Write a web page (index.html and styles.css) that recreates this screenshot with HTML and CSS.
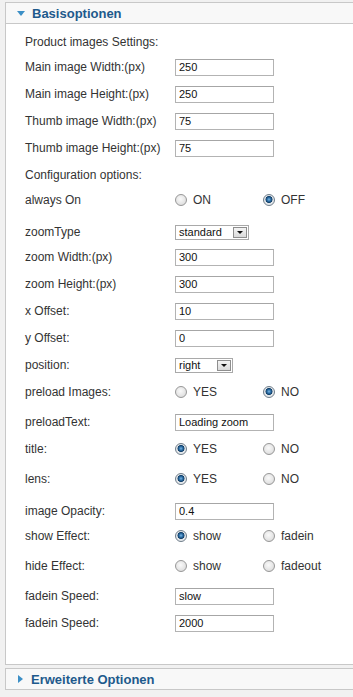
FILE: index.html
```html
<!DOCTYPE html>
<html lang="de">
  <head>
    <meta charset="UTF-8" />
    <meta name="viewport" content="width=device-width, initial-scale=1.0" />
    <title>Zoom Optionen</title>
    <link rel="stylesheet" href="styles.css">
  </head>
  <body>
    <div class="pane open">
      <div class="pane-head"><span class="arrow down"></span>Basisoptionen</div>
      <div class="pane-body">
        <div class="row"><span class="label">Product images Settings:</span></div>
        <div class="row tight">
          <label class="label">Main image Width:(px)</label>
          <input class="text" type="text" value="250" />
        </div>
        <div class="row">
          <label class="label">Main image Height:(px)</label>
          <input class="text" type="text" value="250" />
        </div>
        <div class="row">
          <label class="label">Thumb image Width:(px)</label>
          <input class="text" type="text" value="75" />
        </div>
        <div class="row">
          <label class="label">Thumb image Height:(px)</label>
          <input class="text" type="text" value="75" />
        </div>
        <div class="row"><span class="label">Configuration options:</span></div>
        <div class="row tight">
          <span class="label">always On</span>
          <div class="radios">
            <label class="opt"><input type="radio" name="alwayson" />ON</label>
            <label class="opt"><input type="radio" name="alwayson" checked />OFF</label>
          </div>
        </div>
        <div class="row looser">
          <span class="label">zoomType</span>
          <div class="select wide"><span class="value">standard</span><span class="btn"></span></div>
        </div>
        <div class="row tight">
          <label class="label">zoom Width:(px)</label>
          <input class="text" type="text" value="300" />
        </div>
        <div class="row">
          <label class="label">zoom Height:(px)</label>
          <input class="text" type="text" value="300" />
        </div>
        <div class="row">
          <label class="label">x Offset:</label>
          <input class="text" type="text" value="10" />
        </div>
        <div class="row">
          <label class="label">y Offset:</label>
          <input class="text" type="text" value="0" />
        </div>
        <div class="row">
          <span class="label">position:</span>
          <div class="select"><span class="value">right</span><span class="btn"></span></div>
        </div>
        <div class="row">
          <span class="label">preload Images:</span>
          <div class="radios">
            <label class="opt"><input type="radio" name="preload" />YES</label>
            <label class="opt"><input type="radio" name="preload" checked />NO</label>
          </div>
        </div>
        <div class="row loose">
          <label class="label">preloadText:</label>
          <input class="text" type="text" value="Loading zoom" />
        </div>
        <div class="row">
          <span class="label">title:</span>
          <div class="radios">
            <label class="opt"><input type="radio" name="title" checked />YES</label>
            <label class="opt"><input type="radio" name="title" />NO</label>
          </div>
        </div>
        <div class="row loose">
          <span class="label">lens:</span>
          <div class="radios">
            <label class="opt"><input type="radio" name="lens" checked />YES</label>
            <label class="opt"><input type="radio" name="lens" />NO</label>
          </div>
        </div>
        <div class="row looser">
          <label class="label">image Opacity:</label>
          <input class="text" type="text" value="0.4" />
        </div>
        <div class="row tight">
          <span class="label">show Effect:</span>
          <div class="radios">
            <label class="opt"><input type="radio" name="showeffect" checked />show</label>
            <label class="opt"><input type="radio" name="showeffect" />fadein</label>
          </div>
        </div>
        <div class="row loose">
          <span class="label">hide Effect:</span>
          <div class="radios">
            <label class="opt"><input type="radio" name="hideeffect" />show</label>
            <label class="opt"><input type="radio" name="hideeffect" />fadeout</label>
          </div>
        </div>
        <div class="row loose">
          <label class="label">fadein Speed:</label>
          <input class="text" type="text" value="slow" />
        </div>
        <div class="row">
          <label class="label">fadein Speed:</label>
          <input class="text" type="text" value="2000" />
        </div>
      </div>
    </div>
    <div class="pane closed">
      <div class="pane-head"><span class="arrow right"></span>Erweiterte Optionen</div>
    </div>
  </body>
</html>
```

FILE: styles.css
```css
html,
body {
  height: 100%;
}
body {
  margin: 0;
  padding: 2px 0 0 5px;
  background: #f1f1f1;
  font-family: "Liberation Sans", Arial, sans-serif;
  font-size: 12px;
  color: #333;
  overflow: hidden;
}

.pane {
  background: #fff;
  border: 1px solid #c8c8c8;
  border-right: 0;
}
.pane + .pane {
  margin-top: 3px;
}
.pane-head {
  height: 20px;
  display: flex;
  align-items: center;
  padding-left: 11px;
  background: #f8f8f8;
  color: #1e5a8c;
  font-size: 13px;
  font-weight: bold;
}
.pane.open .pane-head {
  border-bottom: 1px solid #c8c8c8;
}
.arrow {
  width: 0;
  height: 0;
}
.arrow.down {
  border-left: 4px solid transparent;
  border-right: 4px solid transparent;
  border-top: 5px solid #3c8fc6;
  margin-right: 7px;
}
.arrow.right {
  border-top: 4px solid transparent;
  border-bottom: 4px solid transparent;
  border-left: 5px solid #3c8fc6;
  margin: 0 8px 0 1px;
}

.pane-body {
  padding: 0 0 32px 19px;
}
.row {
  display: flex;
  align-items: center;
  height: 18px;
  margin-top: 9px;
}
.row.tight {
  margin-top: 7px;
}
.row.loose {
  margin-top: 12px;
}
.row.looser {
  margin-top: 14px;
}
.label {
  width: 150px;
  flex-shrink: 0;
  white-space: nowrap;
}

.text {
  box-sizing: border-box;
  width: 99px;
  height: 17px;
  margin: 0;
  padding: 0 3px;
  border: 1px solid #b3b3b3;
  border-top-color: #a6a6a6;
  font-family: "Liberation Sans", Arial, sans-serif;
  font-size: 11px;
  color: #111;
  background: #fff;
  outline: none;
}

.radios {
  display: flex;
}
.opt {
  width: 88px;
  display: flex;
  align-items: center;
}
.opt input {
  appearance: none;
  -webkit-appearance: none;
  box-sizing: border-box;
  width: 12px;
  height: 12px;
  margin: 0 6px 0 0;
  border: 1px solid #979797;
  border-radius: 50%;
  background: radial-gradient(circle at 45% 40%, #fafafa 0, #e4e4e4 60%, #cfcfcf 100%);
}
.opt input:checked {
  border-color: #6f7d8a;
  background: radial-gradient(circle at 50% 45%, #7bb7e4 0, #2c6ea6 1.8px, #123f68 3.2px, #dfe4e8 3.8px, #f4f4f4 100%);
}

.select {
  box-sizing: border-box;
  width: 58px;
  height: 15px;
  display: flex;
  align-items: center;
  border: 1px solid #a9a9a9;
  background: #fff;
  font-size: 11px;
  color: #111;
}
.select.wide {
  width: 74px;
}
.select .value {
  flex: 1;
  padding-left: 3px;
}
.select .btn {
  position: relative;
  box-sizing: border-box;
  width: 14px;
  height: 11px;
  margin-right: 1px;
  border: 1px solid #8e8e8e;
  background: linear-gradient(#f4f4f4, #dadada);
}
.select .btn::after {
  content: "";
  position: absolute;
  left: 3px;
  top: 3px;
  border-left: 3px solid transparent;
  border-right: 3px solid transparent;
  border-top: 3px solid #111;
}
```
